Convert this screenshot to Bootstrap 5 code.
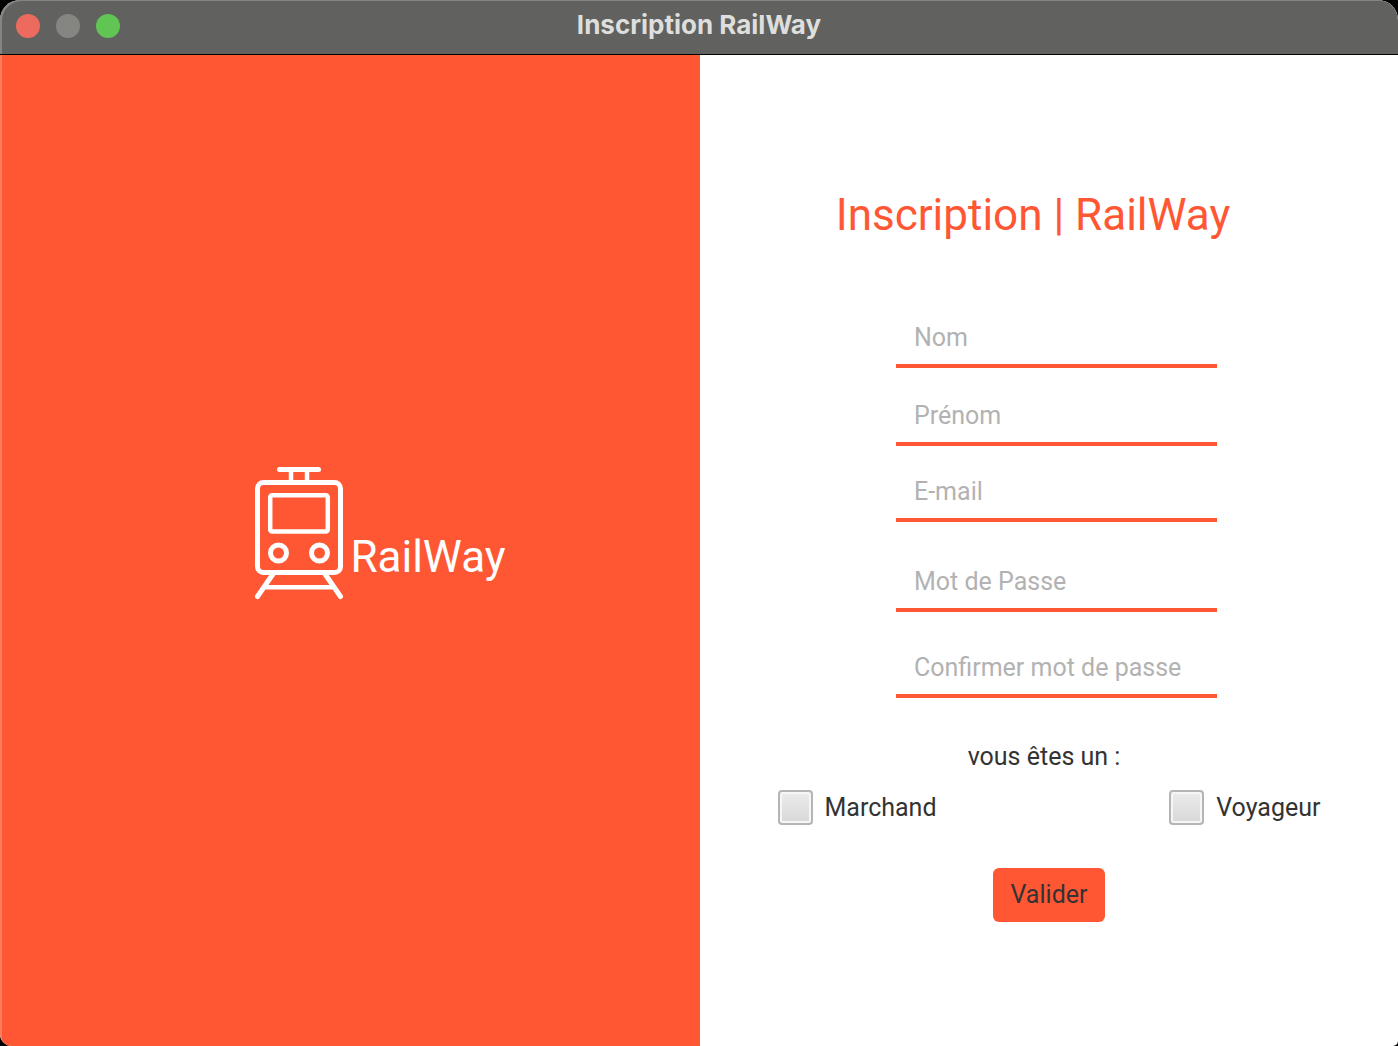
<!DOCTYPE html>
<html lang="fr">
<head>
<meta charset="utf-8">
<meta name="viewport" content="width=device-width, initial-scale=1">
<title>Inscription RailWay</title>
<link href="https://cdn.jsdelivr.net/npm/bootstrap@5.3.0/dist/css/bootstrap.min.css" rel="stylesheet">
<style>
  :root { --rail: #ff5733; --ink: #333; }
  body { background: #000; font-family: Roboto, Inter, sans-serif; font-size: 25px; line-height: 32px; color: var(--ink); }
  .app-window { border-radius: 20px 20px 5px 12px; background: #fff; }
  .title-bar { height: 55px; background: #61625f; border-bottom: 1px solid #000; padding: 0 16px 4px; box-shadow: inset 2px 1px 0 #858683; border-radius: 20px 20px 0 0; }
  .title-bar h1 { font-family: Inter, sans-serif; font-size: 26px; line-height: 32px; font-weight: 700; color: #dededc; }
  .dots { gap: 16px; padding-top: 2px; }
  .dot { width: 24px; height: 24px; background: #858582; }
  .dot-close { background: #ed6a5e; }
  .dot-zoom { background: #61c554; }
  .content-area { border-left: 2px solid #ff7b5e; }
  .brand-side { background: var(--rail); color: #fff; padding: 0 0 36px 58px; }
  .brand-icon { width: 90px; height: 136px; }
  .brand-name { font-size: 44px; line-height: 56px; padding: 0 0 16px 6px; }
  .form-side { padding: 132px 40px 40px; }
  .form-title { font-size: 44px; line-height: 56px; color: var(--rail); padding-right: 32px; margin-bottom: 71px; }
  .fields { width: 336px; max-width: 100%; padding-left: 15px; }
  .line-input { height: 54px; border: 0; border-bottom: 4px solid var(--rail); border-radius: 0; padding: 0 18px 4px; font-size: 25px; line-height: 32px; color: var(--ink); background: transparent; }
  .line-input::placeholder { color: #b2b2b2; opacity: 1; }
  .line-input:focus { box-shadow: none; border-color: #c93714; background: transparent; }
  .name-group { gap: 24px; margin-bottom: 22px; }
  .secret-group { gap: 32px; margin-top: 36px; }
  .kinds { width: 543px; max-width: 100%; margin-top: 43px; }
  .kinds legend { font-size: 25px; line-height: 32px; padding-right: 10px; margin-bottom: 17px; }
  .kind { gap: 12px; }
  .kind .form-check-input { width: 35px; height: 35px; margin: 0; border: 2px solid #b5b5b5; border-radius: 4px; background-color: #dcdcdc; box-shadow: inset 0 0 0 2px #f6f6f6; background-image: linear-gradient(#ececec, #d8d8d8); }
  .kind .form-check-input:checked { background-color: var(--rail); background-image: none; }
  .btn-rail { --bs-btn-bg: var(--rail); --bs-btn-color: var(--ink); --bs-btn-hover-bg: #e94a28; --bs-btn-hover-color: var(--ink); --bs-btn-border-width: 0; font-size: 25px; line-height: 32px; padding: 11px 18px; border-radius: 6px; margin-top: 43px; }
</style>
<script src="https://cdn.jsdelivr.net/npm/bootstrap@5.3.0/dist/js/bootstrap.bundle.min.js"></script>
</head>
<body>
<div class="app-window d-flex flex-column min-vh-100 overflow-hidden">
  <header class="title-bar d-flex align-items-center">
    <div class="dots d-flex flex-fill w-100">
      <span class="dot dot-close rounded-circle"></span>
      <span class="dot rounded-circle"></span>
      <span class="dot dot-zoom rounded-circle"></span>
    </div>
    <h1 class="m-0 text-nowrap text-center">Inscription RailWay</h1>
    <div class="flex-fill w-100"></div>
  </header>
  <main class="content-area row g-0 flex-grow-1">
    <section class="brand-side col-6 d-flex align-items-center justify-content-center">
      <div class="d-flex align-items-end">
        <svg class="brand-icon" viewBox="14 10 90 136" fill="none" stroke="#fff" stroke-width="5" stroke-linecap="round" stroke-linejoin="round" aria-hidden="true">
          <path d="M39.500 14.500H78.500"/>
          <path stroke-width="4.500" d="M51 15V27M67 15V27"/>
          <rect x="17.500" y="27.500" width="83" height="90" rx="6"/>
          <rect x="30.200" y="40.200" width="57.600" height="36.300" rx="2" stroke-width="4.500"/>
          <circle cx="38.500" cy="98" r="8"/>
          <circle cx="79.500" cy="98" r="8"/>
          <path d="M33 119L17.500 141.500M85 119L100.500 141.500"/>
          <path stroke-width="4.500" d="M26 132.300H92"/>
        </svg>
        <div class="brand-name">RailWay</div>
      </div>
    </section>
    <section class="form-side col-6">
      <form class="d-flex flex-column align-items-center">
        <h2 class="form-title fw-normal text-center">Inscription | RailWay</h2>
        <div class="fields">
          <div class="name-group d-flex flex-column">
            <input class="form-control line-input" type="text" placeholder="Nom" aria-label="Nom">
            <input class="form-control line-input" type="text" placeholder="Prénom" aria-label="Prénom">
          </div>
          <input class="form-control line-input" type="email" placeholder="E-mail" aria-label="E-mail">
          <div class="secret-group d-flex flex-column">
            <input class="form-control line-input" type="password" placeholder="Mot de Passe" aria-label="Mot de Passe">
            <input class="form-control line-input" type="password" placeholder="Confirmer mot de passe" aria-label="Confirmer mot de passe">
          </div>
        </div>
        <fieldset class="kinds">
          <legend class="text-center">vous êtes un :</legend>
          <div class="d-flex justify-content-between">
            <div class="kind d-flex align-items-center">
              <input class="form-check-input" type="checkbox" id="marchand"><label for="marchand">Marchand</label>
            </div>
            <div class="kind d-flex align-items-center">
              <input class="form-check-input" type="checkbox" id="voyageur"><label for="voyageur">Voyageur</label>
            </div>
          </div>
        </fieldset>
        <button class="btn btn-rail" type="submit">Valider</button>
      </form>
    </section>
  </main>
</div>
</body>
</html>
